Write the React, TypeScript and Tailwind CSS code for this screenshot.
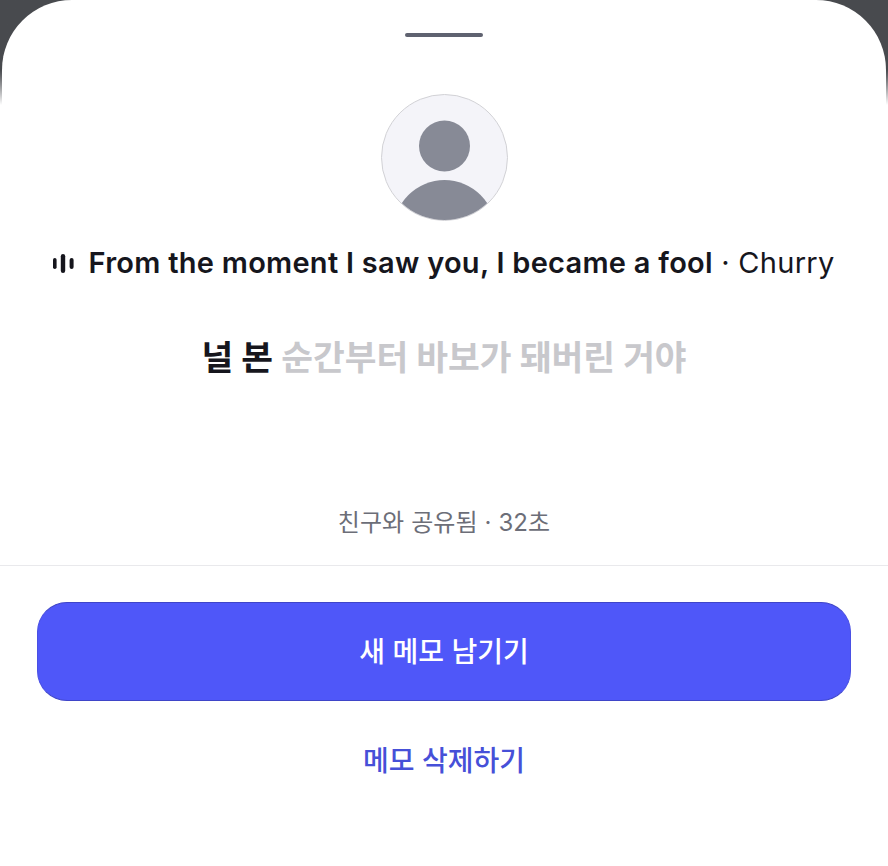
import React from 'react';

const fontStack = 'font-["Inter","Noto_Sans_CJK_KR",sans-serif]';

const Avatar = () => (
  <div className="w-[127px] h-[127px] rounded-full border border-[#d2d2d6] bg-[#f4f4f9] overflow-hidden">
    <svg viewBox="0 0 125 125" className="w-full h-full">
      <circle cx="62.5" cy="51" r="25.5" fill="#878a96" />
      <circle cx="62.5" cy="136" r="51" fill="#878a96" />
    </svg>
  </div>
);

const WaveIcon = () => (
  <svg viewBox="0 0 21 19" className="w-[21px] h-[19px] shrink-0">
    <rect x="0" y="4" width="3.6" height="11" rx="1.8" fill="#16161d" />
    <rect x="7.8" y="0" width="4.4" height="19" rx="2.2" fill="#16161d" />
    <rect x="16.6" y="4" width="4" height="11" rx="2" fill="#16161d" />
  </svg>
);

export default function App() {
  return (
    <div className={`relative w-[888px] h-[866px] overflow-hidden bg-gradient-to-b from-[#484a4e] from-[70px] to-white to-[105px] ${fontStack}`}>
      <div className="h-full mx-[2px] bg-white rounded-t-[70px] flex flex-col items-center">
        <div className="mt-[33px] w-[78px] h-[4px] rounded-full bg-[#5f6270]" />

        <div className="mt-[57px]">
          <Avatar />
        </div>

        <div className="mt-[24px] h-[36px] flex items-center gap-[14px] text-[29px] tracking-[0.27px] text-[#16161d] whitespace-nowrap">
          <WaveIcon />
          <p>
            <span className="font-semibold">From the moment I saw you, I became a fool</span>
            <span> · Churry</span>
          </p>
        </div>

        <p className="mt-[52px] h-[50px] leading-[50px] text-[34.5px] font-bold text-[#c8c8cc] whitespace-nowrap">
          <span className="text-[#16161d]">널 본</span> 순간부터 바보가 돼버린 거야
        </p>

        <p className="mt-[122px] h-[36px] leading-[36px] text-[24px] tracking-[0.1px] text-[#6c6e78] whitespace-nowrap">
          친구와 공유됨 · 32초
        </p>

        <div className="mt-[24px] w-[888px] shrink-0 h-px bg-[#e9e9ec]" />

        <button className="mt-[36px] w-[814px] h-[99px] shrink-0 rounded-[30px] border border-y-[#3f45c8] border-x-[#4a50e4] bg-[#4f57f9] text-white text-[28px] font-medium">
          새 메모 남기기
        </button>

        <button className="mt-[39px] h-[40px] text-[#4650d8] text-[28px] font-medium">
          메모 삭제하기
        </button>
      </div>
    </div>
  );
}
